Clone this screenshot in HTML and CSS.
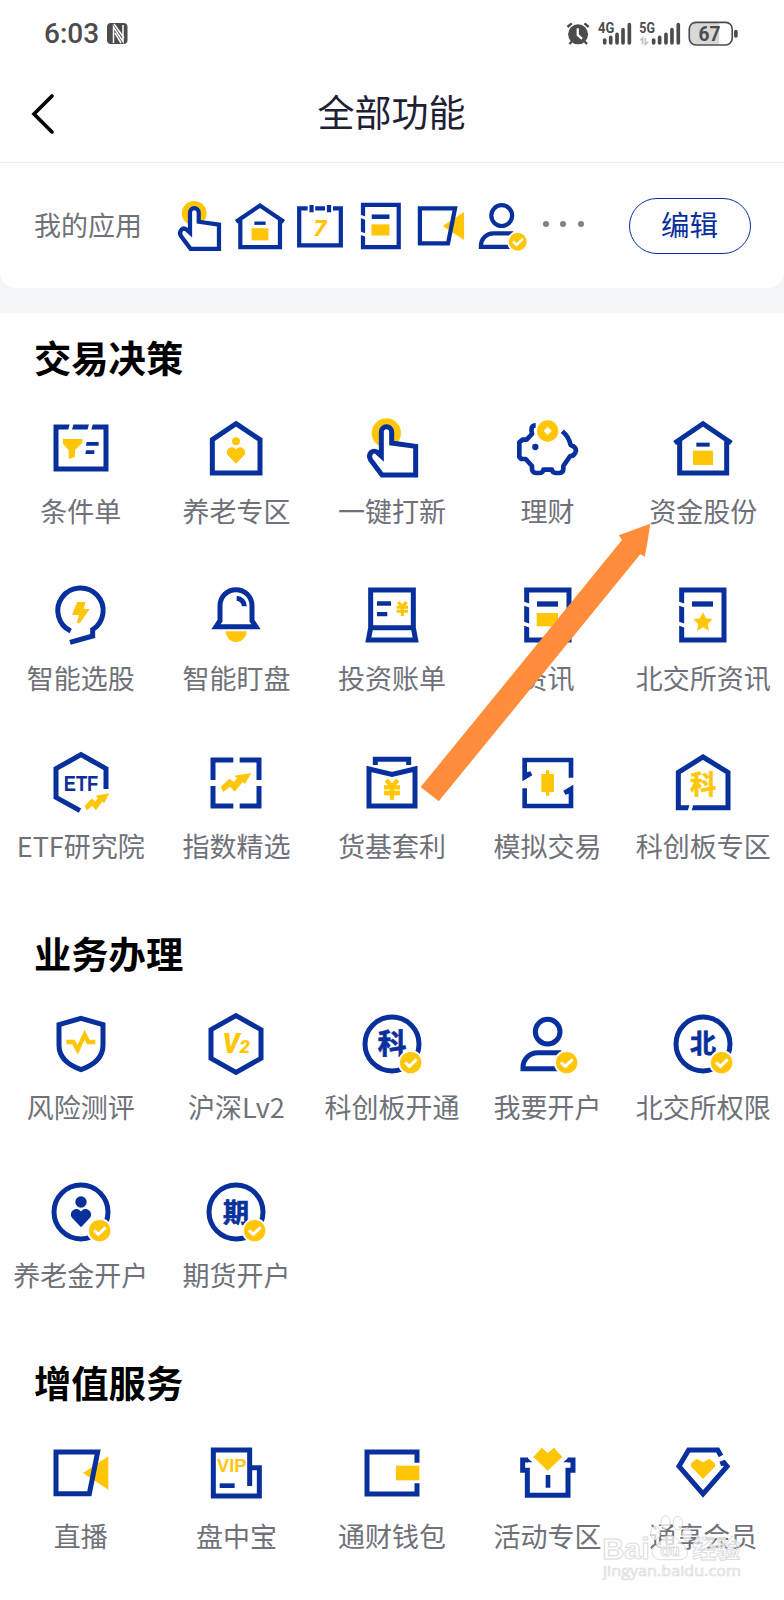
FILE: index.html
```html
<!DOCTYPE html>
<html lang="zh-CN">
<head>
<meta charset="utf-8">
<title>全部功能</title>
<link rel="stylesheet" href="styles.css">
</head>
<body>
<svg class="defs" width="0" height="0" aria-hidden="true">
  <defs>
    <symbol id="heart" viewBox="-32 -28 64 56"><path d="M0 28 L-27 0 C-40 -16 -14 -39 0 -19 C14 -39 40 -16 27 0Z"/></symbol>
    <g id="check"><circle class="w" cx="56" cy="56" r="38"/><circle class="y" cx="56" cy="56" r="32"/><path class="tick" d="M39 55 L52 67 L74 46"/></g>
    <path id="zig" d="M46 -30 L-5 -22 L3 -14 L-6 -3 L-20 -13 L-46 12 L-38 27 L-18 11 L-4 26 L20 -3 L27 3Z"/>
    <symbol id="hand" viewBox="-96 -96 192 192"><circle class="y" cx="-17" cy="-45" r="44"/><path class="l wf" d="M-32 24 V-48 A15.500 15.500 0 0 1 -1 -48 V-15 L71 -5 V81 H-30 L-64 36 C-74 18 -58 2 -44 13Z"/></symbol>
    <symbol id="house" viewBox="-96 -96 192 192"><path class="l" d="M-85 -15 L0 -73 L85 -15 M-70 -22 V75 H71 V-22"/><path class="b" d="M-20 -16H20V-4H-20Z"/><path class="y" d="M-30 8H30V51H-30Z"/></symbol>
    <symbol id="page" viewBox="-96 -96 192 192"><path class="l" d="M-64 -75H63V75H-64Z"/><path class="cut" d="M-80 -37L-50 -26M-80 23L-50 34"/><path class="b" d="M-33 -41H30V-25H-33Z"/></symbol>
    <symbol id="video" viewBox="-96 -96 192 192"><path class="y" d="M6 0L82 -50V50Z"/><path class="l" d="M-75 -63H50L25 62H-75Z"/></symbol>
    <symbol id="person" viewBox="-96 -96 192 192"><circle class="l" cx="-1" cy="-37" r="37"/><path class="l" d="M40 26H-31A44 44 0 0 0 -75 70V74H40"/><use href="#check"/></symbol>
  </defs>
</svg>

<div class="screen">
  <header class="status">
    <div class="clock">
      <span>6:03</span>
      <svg class="nfc" viewBox="0 0 21 21"><rect width="20.500" height="21" rx="4"/><path d="M6.500 20V4L16 18.500V2M7 1L17 15M8 10L14 20" /></svg>
    </div>
    <svg class="signals" viewBox="520 55 520 85">
      <circle cx="556" cy="101" r="30"/>
      <path class="sl" d="M524 79L537 68M588 79L575 68M537 123L530 130M576 123L583 130"/>
      <path class="hands" d="M555 83V103L568 115"/>
      <text x="616" y="98" textLength="49" lengthAdjust="spacingAndGlyphs">4G</text>
      <path class="bar" d="M636 118V127M654 110V127M673 101V127M691 87V127M710 72V127"/>
      <text x="740" y="98" textLength="47" lengthAdjust="spacingAndGlyphs">5G</text>
      <path class="faint" d="M743 119L750 112V131M758 112V131L767 123"/>
      <path class="bar" d="M783 118V127M801 110V127M820 101V127M838 87V127M857 72V127"/>
      <path class="charge" d="M908 65H980V133H908A18 18 0 0 1 890 115V83A18 18 0 0 1 908 65Z"/>
      <rect class="cell-frame" x="890" y="65" width="129" height="68" rx="20"/>
      <path class="bar" d="M1030 93V106"/>
      <text class="pct" x="918" y="122" textLength="66" lengthAdjust="spacingAndGlyphs">67</text>
    </svg>
  </header>

  <nav class="nav">
    <svg class="back" viewBox="0 0 24 42"><path d="M21 3L3 21L21 39"/></svg>
    <h1>全部功能</h1>
  </nav>

  <div class="mine-wrap">
    <section class="mine">
      <span class="mine-label">我的应用</span>
      <div class="mine-icons">
        <svg><use href="#hand"/></svg>
        <svg><use href="#house"/></svg>
        <svg viewBox="-96 -96 192 192"><path class="l" d="M-44 -63H-74V69H74V-63H46M-17 -63H18"/><path class="l" d="M-30 -75V-49M32 -75V-49"/><text class="ty seven" x="0" y="36">7</text></svg>
        <svg viewBox="-96 -96 192 192"><use href="#page" x="-96" y="-96" width="192" height="192"/><path class="y" d="M-34 -6H30V34H-34Z"/></svg>
        <svg><use href="#video"/></svg>
        <svg><use href="#person"/></svg>
      </div>
      <div class="dots"><i></i><i></i><i></i></div>
      <button class="edit">编辑</button>
    </section>
  </div>

  <main>
    <section class="group">
      <h2>交易决策</h2>
      <div class="grid">
        <div class="item"><svg viewBox="-96 -96 192 192"><path class="l" d="M-75 -63H75V63H-75Z"/><path class="cut" d="M-26 -80L-35 -46M32 -80L23 -46"/><path class="y" d="M-54 -27H4V-16L-18 6V27L-37 33V6L-54 -12Z"/><path class="b" d="M17 -18H53V-7H15ZM15 7H40V18H13Z"/></svg><span>条件单</span></div>
        <div class="item"><svg viewBox="-96 -96 192 192"><path class="l" d="M0 -73L72 -25V75H-71V-25Z"/><circle class="y" cx="0" cy="-20" r="12"/><use class="y" href="#heart" x="-29" y="-4" width="58" height="52"/></svg><span>养老专区</span></div>
        <div class="item"><svg><use href="#hand"/></svg><span>一键打新</span></div>
        <div class="item"><svg viewBox="-96 -96 192 192"><path class="l r" d="M-37 -68C-49 -68 -52 -60 -48 -42L-64 -25H-76L-86 -17V27L-80 33H-67L-48 54V64Q-46 74 -36 75H-25Q-15 74 -14 65H12Q13 74 23 75H35Q45 74 46 64V54L66 25Q80 24 84 8Q83 -4 68 -9Q62 -34 43 -50"/><circle class="b" cx="-38" cy="-3" r="9.500"/><circle class="y" cx="-1" cy="-51" r="32"/><path class="w" d="M-1 -63L11 -51L-1 -39L-13 -51Z"/></svg><span>理财</span></div>
        <div class="item"><svg><use href="#house"/></svg><span>资金股份</span></div>

        <div class="item"><svg viewBox="-96 -96 192 192"><path class="l" d="M-31 48A68 68 0 1 1 35 44V63L-33 82"/><path class="y" d="M-12 -39H14L8 -18H26L-3 24H-13L-6 0H-27Z"/></svg><span>智能选股</span></div>
        <div class="item"><svg viewBox="-96 -96 192 192"><path class="l" d="M-48 17V-28A48 48 0 0 1 48 -28V17L60 35H-60Z"/><path class="l" d="M2 -50A24 24 0 0 1 25 -26"/><path class="y" d="M-31 49H32A31.500 32 0 0 1 -31 49"/></svg><span>智能盯盘</span></div>
        <div class="item"><svg viewBox="-96 -96 192 192"><path class="l" d="M-64 38V-75H64V38H-64L-71 75H71L64 38"/><path class="b" d="M-45 -41H-3V-28H-45ZM-45 -9H-14V4H-45Z"/><path class="yen" transform="translate(31 -19) scale(.72)" d="M-17 -28L0 -8L17 -28M-24 -6H24M-24 11H24M0 -8V31"/></svg><span>投资账单</span></div>
        <div class="item"><svg viewBox="-96 -96 192 192"><use href="#page" x="-96" y="-96" width="192" height="192"/><path class="y" d="M-34 -6H30V34H-34Z"/></svg><span>资讯</span></div>
        <div class="item"><svg viewBox="-96 -96 192 192"><use href="#page" x="-96" y="-96" width="192" height="192"/><path class="y" d="M0 -9L9 10L29 13L14 27L18 47L0 37L-18 47L-14 27L-29 13L-9 10Z"/></svg><span>北交所资讯</span></div>

        <div class="item"><svg viewBox="-96 -96 192 192"><path class="l" d="M75 18V-43L0 -85L-75 -43V43L-3 83"/><text class="tb etf" x="0" y="24" textLength="104" lengthAdjust="spacingAndGlyphs">ETF</text><use class="y" href="#zig" transform="translate(48 58) scale(.8 .9)"/></svg><span>ETF研究院</span></div>
        <div class="item"><svg viewBox="-96 -96 192 192"><path class="l" d="M-69 -9V-69H-8M11 -69H69V-9M69 9V69H11M-8 69H-69V9"/><use class="y" href="#zig"/></svg><span>指数精选</span></div>
        <div class="item"><svg viewBox="-96 -96 192 192"><path class="l" d="M-69 -42L0 -26L69 -42V69H-69ZM-50 -54V-71H50V-54"/><path class="yen" d="M-17 -28L0 -8L17 -28M-24 -6H24M-24 11H24M0 -8V31" transform="translate(0 19)"/></svg><span>货基套利</span></div>
        <div class="item"><svg viewBox="-96 -96 192 192"><path class="b" d="M-77 -76H76V-16H62V-62H-63V-32L-53 -35L-47 -23L-77 -5ZM76 76H-77V16H-63V62H62V32L52 35L46 23L76 5Z"/><path class="y" d="M-20 -27H-6V-38H4V-27H18V27H4V38H-6V27H-20Z"/></svg><span>模拟交易</span></div>
        <div class="item"><svg viewBox="-96 -96 192 192"><path class="l" d="M0 -78L75 -32V74H-74V-32Z"/><path class="cut" d="M-33 60L-42 90"/><text class="ty han" x="1" y="34">科</text></svg><span>科创板专区</span></div>
      </div>
    </section>

    <section class="group">
      <h2>业务办理</h2>
      <div class="grid">
        <div class="item"><svg viewBox="-96 -96 192 192"><path class="l" d="M0 -77L66 -58V4C66 44 34 65 0 77C-34 65 -66 44 -66 4V-58Z"/><path class="pulse" d="M-44 -6H-23L-10 17L11 -28L22 -6H43"/></svg><span>风险测评</span></div>
        <div class="item"><svg viewBox="-96 -96 192 192"><path class="l" d="M0 -85L75 -43V43L0 85L-75 43V-43Z"/><text class="ty vee" x="-15" y="27">V</text><text class="ty two" x="26" y="27">2</text></svg><span>沪深Lv2</span></div>
        <div class="item"><svg viewBox="-96 -96 192 192"><circle class="l" r="81"/><text class="tb han big" x="0" y="31">科</text><use href="#check"/></svg><span>科创板开通</span></div>
        <div class="item"><svg><use href="#person"/></svg><span>我要开户</span></div>
        <div class="item"><svg viewBox="-96 -96 192 192"><circle class="l" r="81"/><text class="tb han" x="0" y="28">北</text><use href="#check"/></svg><span>北交所权限</span></div>
        <div class="item"><svg viewBox="-96 -96 192 192"><circle class="l" r="81"/><circle class="b" cx="0" cy="-30" r="17"/><use class="b" href="#heart" x="-32" y="-11" width="64" height="57"/><use href="#check"/></svg><span>养老金开户</span></div>
        <div class="item"><svg viewBox="-96 -96 192 192"><circle class="l" r="81"/><text class="tb han" x="0" y="30">期</text><use href="#check"/></svg><span>期货开户</span></div>
      </div>
    </section>

    <section class="group">
      <h2>增值服务</h2>
      <div class="grid">
        <div class="item"><svg><use href="#video"/></svg><span>直播</span></div>
        <div class="item"><svg viewBox="-96 -96 192 192"><path class="l" d="M41 -16H70V69H-68V-69H41V39"/><path class="b" d="M-49 31H-4V45H-49Z"/><text class="ty vip" x="-13" y="-3" textLength="88" lengthAdjust="spacingAndGlyphs">VIP</text></svg><span>盘中宝</span></div>
        <div class="item"><svg viewBox="-96 -96 192 192"><path class="l" d="M75 -31V-63H-75V63H75V31"/><path class="y" d="M12 -22H82V22H12Z"/></svg><span>通财钱包</span></div>
        <div class="item"><svg viewBox="-96 -96 192 192"><path class="l" d="M-60 -39H-76V-8H-62V67H60V-8H75V-39H59"/><path class="b" d="M-62 -46L-47 -32H-62ZM61 -46L46 -32H61ZM-7 6H7V44H-7Z"/><path class="y" d="M-1 -7L-44 -48L-19 -76L-1 -60L18 -76L43 -48Z"/></svg><span>活动专区</span></div>
        <div class="item"><svg viewBox="-96 -96 192 192"><path class="l" d="M54 -51L44 -69H-43L-72 -20L0 63L72 -20L63 -31L52 -27"/><path class="y" d="M0 18L-35 -18Q-40 -25 -32 -32L-19 -43L0 -32L19 -43L32 -32Q40 -25 35 -18Z"/></svg><span>通享会员</span></div>
      </div>
    </section>
  </main>

  <svg class="pointer" viewBox="415 518 240 290"><path d="M650.300 523.700L618.700 535.300L622 540L420.700 787L438.700 801.300L640.300 554.300L644.700 556.700L647 545Z"/></svg>

  <svg class="mark" viewBox="620 340 440 210">
    <text class="brand" x="630" y="478" textLength="142" lengthAdjust="spacingAndGlyphs">Bai</text>
    <path class="paw" d="M832 408C812 408 808 426 792 436C772 450 778 480 804 480H864C890 480 892 450 872 436C858 426 852 408 832 408Z"/>
    <ellipse class="paw" cx="789" cy="400" rx="14" ry="20"/><ellipse class="paw" cx="820" cy="368" rx="14" ry="20"/><ellipse class="paw" cx="856" cy="370" rx="14" ry="20"/><ellipse class="paw" cx="884" cy="404" rx="13" ry="19"/>
    <text class="du" x="804" y="468">du</text>
    <text class="cn" x="900" y="474" textLength="144" lengthAdjust="spacingAndGlyphs">经验</text>
    <text class="url" x="632" y="530" textLength="414" lengthAdjust="spacingAndGlyphs">jingyan.baidu.com</text>
  </svg>
</div>
</body>
</html>
```
FILE: styles.css
```css
:root {
  --blue: #08309c;
  --yellow: #ffc607;
  --gray: #6f7179;
}
* { box-sizing: border-box; }
body {
  margin: 0;
  background: #fefefe;
  font-family: "Noto Sans CJK SC", sans-serif;
}
.defs { position: absolute; }
.screen {
  position: relative;
  width: 784px;
  height: 1600px;
  overflow: hidden;
  background: #fefefe;
}

/* status bar */
.status {
  height: 66px;
  padding: 0 44.800px 0 44px;
  display: flex;
  align-items: center;
  justify-content: space-between;
}
.clock {
  display: flex;
  align-items: center;
  gap: 8px;
  font: 500 28px/32px Roboto, sans-serif;
  color: #4c4c4c;
}
.clock span { padding-top: 2px; }
.nfc { width: 21px; height: 21px; fill: #4c4c4c; }
.nfc path { fill: none; stroke: #fefefe; stroke-width: 1.500; }
.signals { width: 173.300px; height: 28.300px; fill: #4c4c4c; font: 700 44px Roboto, sans-serif; }
.signals .pct { font-size: 62px; }
.signals .sl { stroke: #4c4c4c; stroke-width: 7; }
.signals .hands { fill: none; stroke: #fefefe; stroke-width: 7; }
.signals .bar { stroke: #4c4c4c; stroke-width: 11; stroke-linecap: round; }
.signals .faint { fill: none; stroke: #c4c4c4; stroke-width: 5; }
.signals .charge { fill: #d8d8d8; }
.signals .cell-frame { fill: none; stroke: #4c4c4c; stroke-width: 5; }

/* title bar */
.nav {
  height: 97px;
  padding: 0 32px 0 31px;
  display: grid;
  grid-template-columns: 24px 1fr 24px;
  align-items: center;
  border-bottom: 1px solid #ebebee;
}
.back { width: 24px; height: 42px; fill: none; stroke: #050507; stroke-width: 3.700; stroke-linecap: round; }
h1 {
  margin: 0;
  padding-bottom: 7px;
  text-align: center;
  font-size: 37px;
  line-height: 50px;
  font-weight: 400;
  color: #1e2133;
}

/* pinned apps */
.mine-wrap { background: #f4f5f9; padding-bottom: 25px; }
.mine {
  height: 125px;
  padding: 0 33px 0 34px;
  display: flex;
  align-items: center;
  background: #fefefe;
  border-radius: 0 0 16px 16px;
}
.mine-label { width: 138px; padding-bottom: 1px; font-size: 27px; line-height: 36px; color: var(--gray); }
.mine-icons { display: flex; gap: 6.600px; }
.mine-icons svg { width: 54px; height: 54px; }
.dots { display: flex; gap: 11.700px; margin: -4px 0 0 13.700px; }
.dots i { width: 6px; height: 6px; border-radius: 50%; background: #808080; }
.edit {
  width: 122px;
  height: 56px;
  margin-left: auto;
  padding: 0 1px 3px 0;
  border: 1px solid var(--blue);
  border-radius: 28px;
  background: none;
  color: var(--blue);
  font: 400 28.500px/36px "Noto Sans CJK SC", sans-serif;
}

/* feature groups */
.group { padding-top: 18.500px; }
.group + .group { padding-top: 64px; }
h2 {
  margin: 0 0 34px;
  padding-left: 34px;
  font-size: 37.300px;
  line-height: 50px;
  font-weight: 700;
  color: #000;
}
.grid {
  display: grid;
  grid-template-columns: repeat(5, 1fr);
  row-gap: 54.200px;
  padding: 0 3px;
}
.item { display: flex; flex-direction: column; align-items: center; }
.item svg { width: 64px; height: 64px; }
.item span {
  margin-top: 13.400px;
  font-size: 27px;
  line-height: 36px;
  white-space: nowrap;
  color: var(--gray);
}

/* icon parts */
.l { fill: none; stroke: var(--blue); stroke-width: 15; }
.l.wf { fill: #fefefe; }
.l.r { stroke-linejoin: round; stroke-width: 14; }
.b { fill: var(--blue); }
.y { fill: var(--yellow); }
.w { fill: #fefefe; }
.cut { fill: none; stroke: #fefefe; stroke-width: 11; }
.tick { fill: none; stroke: #fefefe; stroke-width: 9; }
.yen { fill: none; stroke: var(--yellow); stroke-width: 13; }
.pulse { fill: none; stroke: var(--yellow); stroke-width: 13; stroke-miterlimit: 8; }
.tb, .ty { font-weight: 700; text-anchor: middle; }
.tb { fill: var(--blue); }
.ty { fill: var(--yellow); }
.han { font-size: 78px; stroke: var(--yellow); stroke-width: 2; }
.tb.han { stroke: var(--blue); }
.han.big { font-size: 86px; }
.etf { font-family: "Liberation Sans", sans-serif; font-size: 68px; }
.vip { font-family: "Liberation Sans", sans-serif; font-size: 56px; }
.seven { font: italic 800 78px Inter, sans-serif; }
.vee { font: italic 900 80px Roboto, sans-serif; }
.two { font: italic 900 56px Roboto, sans-serif; }

/* overlays */
.pointer { position: absolute; left: 415px; top: 518px; width: 240px; height: 290px; fill: #ff8d3a; }
.mark {
  position: absolute;
  left: 598.700px;
  top: 1513.300px;
  width: 146.700px;
  height: 70px;
  fill: rgba(255, 255, 255, .72);
  stroke: #dcdcdc;
  stroke-width: 3;
}
.brand { font: 700 88px "Liberation Sans", sans-serif; }
.du { font: 700 48px "Liberation Sans", sans-serif; }
.cn { font: 700 76px "Noto Sans CJK SC", sans-serif; }
.url { font: 400 42px "Open Sans", sans-serif; stroke-width: 2; }
```
